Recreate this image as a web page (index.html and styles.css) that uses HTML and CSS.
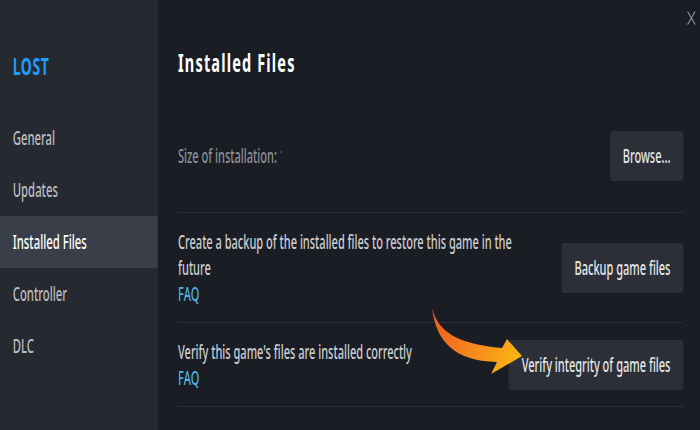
FILE: index.html
```html
<!DOCTYPE html>
<html lang="en">
<head>
<meta charset="utf-8">
<title>Installed Files</title>
<link rel="stylesheet" href="styles.css">
</head>
<body>
<div class="page">
  <div class="app">
    <aside class="sidebar">
      <div class="brand">LOST</div>
      <nav class="nav">
        <div class="nav-item">General</div>
        <div class="nav-item">Updates</div>
        <div class="nav-item active">Installed Files</div>
        <div class="nav-item">Controller</div>
        <div class="nav-item">DLC</div>
      </nav>
    </aside>
    <main class="main">
      <h1 class="title">Installed Files</h1>
      <section class="row row-first">
        <div class="row-text muted">Size of installation: <span class="size-val">1</span></div>
        <button class="btn">Browse...</button>
      </section>
      <section class="row">
        <div class="row-text">
          <div>Create a backup of the installed files to restore this game in the future</div>
          <a class="faq">FAQ</a>
        </div>
        <button class="btn">Backup game files</button>
      </section>
      <section class="row">
        <div class="row-text">
          <div>Verify this game's files are installed correctly</div>
          <a class="faq">FAQ</a>
        </div>
        <button class="btn">Verify integrity of game files</button>
      </section>
    </main>
    <svg class="close" viewBox="0 0 16 14" width="16" height="14"><path d="M1.5 0.5 L14.5 13.5 M14.5 0.5 L1.5 13.5" stroke="#8e959c" stroke-width="1.6" fill="none"/></svg>
  </div>
  <svg class="arrow" viewBox="0 0 700 430" width="700" height="430">
    <defs>
      <linearGradient id="ag" x1="432" y1="310" x2="522" y2="360" gradientUnits="userSpaceOnUse">
        <stop offset="0" stop-color="#ee5a1f"/>
        <stop offset="0.55" stop-color="#f6891c"/>
        <stop offset="1" stop-color="#fdb913"/>
      </linearGradient>
    </defs>
    <path d="M432,308 C438,331 456,344 502,348 L507,339 L522,356 L491,374 L497,362 C454,361 436,341 432,308 Z" fill="url(#ag)"/>
  </svg>
</div>
</body>
</html>
```

FILE: styles.css
```css
* { box-sizing: border-box; }
html, body { margin: 0; padding: 0; }
body {
  background: #1a1d24;
  font-family: "Noto Sans", "Open Sans", sans-serif;
  font-size: 19px;
  font-weight: 500;
  color: #cbced2;
}
/* The reference UI is shown horizontally compressed; lay out at natural
   width, then compress the whole app once. */
.page {
  position: relative;
  width: 700px;
  height: 430px;
  overflow: hidden;
}
.app {
  position: relative;
  display: flex;
  width: 1207px;
  height: 430px;
  transform: scaleX(0.58);
  transform-origin: 0 0;
}
.sidebar {
  width: 272px;
  flex: none;
  background: #262930;
}
.brand {
  padding: 52px 0 0 22px;
  height: 112px;
  line-height: 28px;
  font-size: 24px;
  font-weight: 700;
  letter-spacing: 1px;
  color: #1a9fff;
}
.nav { display: flex; flex-direction: column; }
.nav-item {
  height: 52px;
  line-height: 52px;
  padding-left: 22px;
  font-size: 19.5px;
  color: #bbbec2;
}
.nav-item.active {
  background: #3a3e48;
  color: #ffffff;
}
.main {
  flex: 1;
  padding: 0 29px 0 35px;
}
.title {
  margin: 0;
  padding-top: 47px;
  height: 100px;
  line-height: 30px;
  font-size: 25px;
  font-weight: 700;
  letter-spacing: 2px;
  color: #ffffff;
}
.row {
  display: flex;
  align-items: center;
  justify-content: space-between;
  gap: 48px;
  padding: 16px 0 15px;
  border-bottom: 1px solid #2a2e36;
  line-height: 26px;
}
.row-first { padding: 31px 0 31px; }
.row-text { flex: 1; }
.muted { color: #8c9096; }
.size-val {
  display: inline-block;
  width: 4px;
  overflow: hidden;
  vertical-align: bottom;
  color: #3a6fd8;
}
.faq { display: block; color: #4fb3e3; }
.btn {
  flex: none;
  height: 50px;
  padding: 0 22px;
  border: none;
  border-radius: 4px;
  background: #2c2f37;
  color: #e4e7ea;
  font: inherit;
}
.close {
  position: absolute;
  top: 11px;
  right: 7px;
}
.arrow {
  position: absolute;
  left: 0;
  top: 0;
  pointer-events: none;
}
```
